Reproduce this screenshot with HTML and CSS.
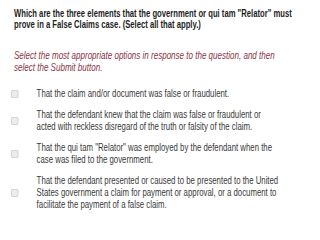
FILE: index.html
```html
<!DOCTYPE html>
<html>
<head>
<meta charset="utf-8">
<link rel="stylesheet" href="styles.css">
</head>
<body>
<div class="page">
  <div class="narrow">
    <p class="question">Which are the three elements that the government or qui tam "Relator" must<br>prove in a False Claims case. (Select all that apply.)</p>
    <p class="instruction">Select the most appropriate options in response to the question, and then<br>select the Submit button.</p>
    <ul class="options">
      <li class="option"><span class="box"></span><span class="label">That the claim and/or document was false or fraudulent.</span></li>
      <li class="option"><span class="box"></span><span class="label">That the defendant knew that the claim was false or fraudulent or<br>acted with reckless disregard of the truth or falsity of the claim.</span></li>
      <li class="option"><span class="box"></span><span class="label">That the qui tam "Relator" was employed by the defendant when the<br>case was filed to the government.</span></li>
      <li class="option"><span class="box"></span><span class="label">That the defendant presented or caused to be presented to the United<br>States government a claim for payment or approval, or a document to<br>facilitate the payment of a false claim.</span></li>
    </ul>
  </div>
</div>
</body>
</html>
```
FILE: styles.css
```css
html, body {
  margin: 0;
  padding: 0;
  background: #ffffff;
  overflow: hidden;
}
.page {
  padding: 7.5px 0 0 14px;
  font-family: "Liberation Sans", Arial, sans-serif;
}
/* Condensed (Arial Narrow-like) look: the narrow face is not installed, so the text block is condensed */
.narrow {
  width: 395px;
  transform: scaleX(0.73);
  transform-origin: 0 0;
}
.question {
  margin: 0;
  font-weight: bold;
  font-size: 10.5px;
  line-height: 11px;
  color: #1e1e1e;
  white-space: nowrap;
}
.instruction {
  margin: 19.5px 0 0 0;
  font-style: italic;
  font-size: 11px;
  line-height: 12px;
  color: #8c3347;
  white-space: nowrap;
}
.options {
  list-style: none;
  margin: 15px 0 0 -4.1px;
  padding: 0;
  display: flex;
  flex-direction: column;
  gap: 9.5px;
}
.option {
  display: flex;
  align-items: center;
  gap: 24.7px;
}
.box {
  flex: none;
  width: 8.4px;
  height: 6px;
  border: 1px solid #cfcfcf;
  border-left-width: 1.3px;
  border-right-width: 1.3px;
  background: #ececec;
  border-radius: 1px;
}
.label {
  font-size: 10.7px;
  line-height: 11.8px;
  color: #3a3a3a;
  white-space: nowrap;
}
```
